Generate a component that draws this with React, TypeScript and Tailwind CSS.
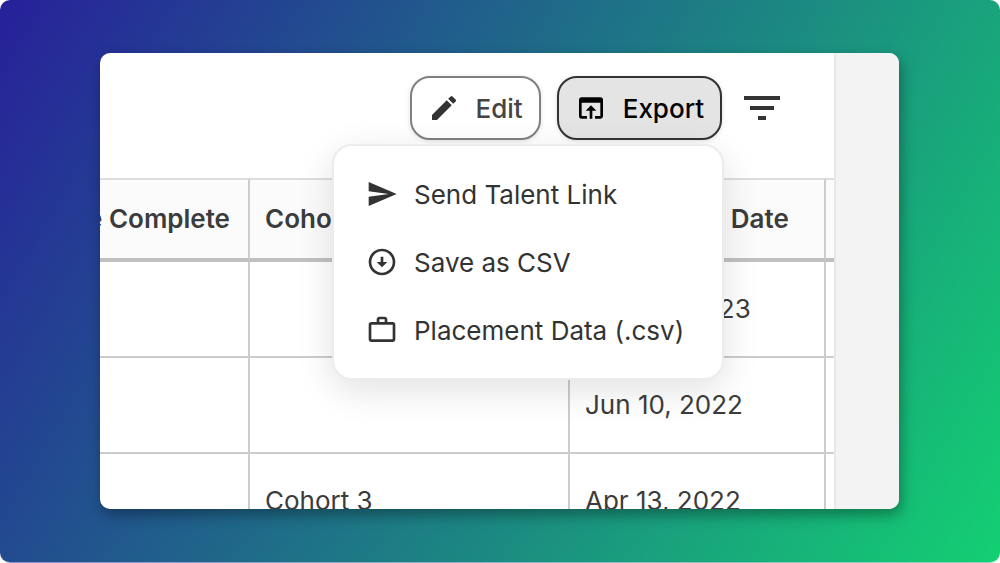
import clsx from "clsx";
import {
  MdEdit,
  MdFilterList,
  MdOpenInBrowser,
  MdOutlineArrowCircleDown,
  MdSend,
  MdWorkOutline,
} from "react-icons/md";

const menuItems = [
  { label: "Send Talent Link", Icon: MdSend },
  { label: "Save as CSV", Icon: MdOutlineArrowCircleDown },
  { label: "Placement Data (.csv)", Icon: MdWorkOutline },
];

const rows = [
  { id: 1, cohort: "", date: "Mar 20, 2023" },
  { id: 2, cohort: "", date: "Jun 10, 2022" },
  { id: 3, cohort: "Cohort 3", date: "Apr 13, 2022" },
];

const buttonClass =
  "flex h-16 items-center gap-4 rounded-[20px] border-2 px-4 text-[26px] font-medium shadow-[0_1px_5px_rgba(0,0,0,0.12)]";

const ExportMenu = () => (
  <ul
    role="menu"
    className="absolute top-full -right-0.5 z-10 mt-1 w-[392px] rounded-[20px] border-2 border-[#ececec] bg-white bg-clip-padding py-[14px] shadow-[0_10px_36px_rgba(0,0,0,0.12)]"
  >
    {menuItems.map(({ label, Icon }) => (
      <li key={label} role="none">
        <button
          type="button"
          role="menuitem"
          className="flex h-[68px] w-full items-center gap-4 px-8 text-[26px] whitespace-nowrap text-[#333]"
        >
          <Icon className="size-8 shrink-0" aria-hidden="true" />
          {label}
        </button>
      </li>
    ))}
  </ul>
);

const Toolbar = () => (
  <div className="flex items-start justify-end gap-4 pt-[23px] pr-12 pb-[38px]">
    <button
      type="button"
      className={clsx(buttonClass, "border-[#808080] bg-white text-[#444]")}
    >
      <MdEdit className="size-8 text-[#333]" aria-hidden="true" />
      Edit
    </button>
    <div className="relative">
      <button
        type="button"
        aria-haspopup="menu"
        aria-expanded="true"
        className={clsx(buttonClass, "border-[#333] bg-[#e4e4e4] text-black")}
      >
        <MdOpenInBrowser className="size-8" aria-hidden="true" />
        Export
      </button>
      <ExportMenu />
    </div>
    <button
      type="button"
      aria-label="Filter"
      className="flex h-16 items-center text-[#333]"
    >
      <MdFilterList className="size-12" aria-hidden="true" />
    </button>
  </div>
);

const RecordsTable = () => (
  <table className="w-full table-fixed border-separate border-spacing-0 text-left text-[26px] whitespace-nowrap text-[#3c3c3c]">
    <colgroup>
      <col />
      <col className="w-80" />
      <col className="w-64" />
      <col className="w-2" />
    </colgroup>
    <thead>
      <tr className="h-[84px] bg-[#fbfbfb] *:border-t-2 *:border-b-4 *:border-t-[#ddd] *:border-b-[#c0c0c0] *:p-0 *:pb-0.5 *:font-semibold">
        <th className="border-r-2 border-r-[#ccc]">
          <div className="flex justify-end overflow-hidden pr-[18px]">
            <span>e Complete</span>
          </div>
        </th>
        <th className="border-r-2 border-r-[#ccc]">
          <div className="px-[15px]">Cohort</div>
        </th>
        <th className="border-r-2 border-r-[#ccc]">
          <div className="px-[15px]">Graduation Date</div>
        </th>
        <td />
      </tr>
    </thead>
    <tbody>
      {rows.map(({ id, cohort, date }) => (
        <tr
          key={id}
          className="h-24 *:border-b-2 *:border-[#ccc] *:px-[15px] *:pt-0 *:pb-0.5"
        >
          <td className="border-r-2" />
          <td className="border-r-2">{cohort}</td>
          <td className="border-r-2">{date}</td>
          <td className="px-0!" />
        </tr>
      ))}
    </tbody>
  </table>
);

export default function App() {
  return (
    <div className="h-screen rounded-[10px] border-b border-white/50 bg-linear-[120deg,#27209a,#1b9180_65%,#13d072] py-[53px] pr-[101px] pl-[100px] font-['Inter',sans-serif]">
      <main className="flex h-full overflow-hidden rounded-[10px] bg-white shadow-[2px_6px_14px_rgba(0,0,0,0.35)]">
        <section className="min-w-0 flex-1">
          <Toolbar />
          <RecordsTable />
        </section>
        <aside className="w-[65px] shrink-0 border-l-2 border-[#e8e8e8] bg-[#f3f3f3]" />
      </main>
    </div>
  );
}
